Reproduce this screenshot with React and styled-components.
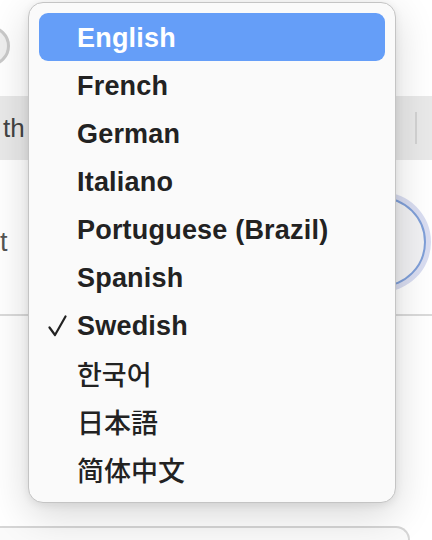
import styled, { createGlobalStyle } from 'styled-components'
import React from "react";

const Global = createGlobalStyle`
    html, body {
        margin: 0;
        padding: 0;
        background: #ffffff;
    }
    body {
        font-family: "Liberation Sans", Arial, "Noto Sans CJK SC", sans-serif;
    }
`

const Page = styled.div`
    position: relative;
    width: 432px;
    height: 540px;
    overflow: hidden;
    background: #ffffff;
`

//Background settings page
const Backdrop = styled.div`
    display: flex;
    flex-direction: column;
    height: 100%;
`

const HeaderRow = styled.div`
    height: 96px;
    display: flex;
    align-items: flex-start;
    padding-top: 26px;
    box-sizing: border-box;
`

const Avatar = styled.div`
    width: 34px;
    height: 34px;
    margin-left: -30px;
    border-radius: 50%;
    border: 3px solid #c9c9c9;
    background: #efefef;
`

const SearchBar = styled.div`
    height: 64px;
    background: #e9e9e9;
    display: flex;
    align-items: center;
    justify-content: space-between;
    padding: 0 15px 0 3px;
    font-size: 26px;
    color: #444;
`

const Divider = styled.div`
    width: 2px;
    height: 32px;
    background: #d2d2d2;
`

const FieldRow = styled.div`
    height: 156px;
    display: flex;
    align-items: center;
    justify-content: space-between;
    border-bottom: 2px solid #dadada;
    box-sizing: border-box;
    padding-top: 10px;
    font-size: 27px;
    color: #555;
`

const Knob = styled.div`
    width: 86px;
    height: 86px;
    margin-right: 6px;
    border-radius: 50%;
    background: #f1f1f3;
    border: 2px solid #7f9fd8;
    box-shadow: 0 0 0 5px #d9ddf1;
`

const Spacer = styled.div`
    flex: 1;
`

const Card = styled.div`
    height: 12px;
    margin: 0 22px 0 -40px;
    border: 2px solid #d6d6d6;
    border-bottom: none;
    border-radius: 0 44px 0 0;
    background: #fafafa;
`

//Menu
const Menu = styled.ul`
    position: absolute;
    left: 28px;
    top: 2px;
    width: 368px;
    margin: 0;
    padding: 10px 10px 9px;
    box-sizing: border-box;
    list-style: none;
    background: #fafafa;
    border: 1px solid #c4c4c4;
    border-radius: 15px;
    box-shadow: 0 12px 40px rgba(0, 0, 0, 0.16), 0 2px 8px rgba(0, 0, 0, 0.08);
`

const Item = styled.li`
    position: relative;
    height: 48px;
    display: flex;
    align-items: center;
    padding-left: 38px;
    padding-top: ${p => p.$cjk ? '0' : '3px'};
    box-sizing: border-box;
    border-radius: 9px;
    background: ${p => p.$active ? '#659ef8' : 'transparent'};
    color: ${p => p.$active ? '#ffffff' : '#222222'};
    font-size: 27px;
    font-weight: ${p => p.$cjk ? 500 : 700};
    font-family: ${p => p.$cjk
        ? '"Noto Sans CJK KR", "Noto Sans CJK JP", "Noto Sans CJK SC", sans-serif'
        : '"Liberation Sans", Arial, sans-serif'};
    letter-spacing: ${p => p.$cjk ? '0' : '0.2px'};
    white-space: nowrap;
`

const Check = styled.svg`
    position: absolute;
    left: 9px;
    top: 14px;
    width: 19px;
    height: 22px;
`

const languages = [
    {label: 'English', active: true},
    {label: 'French'},
    {label: 'German'},
    {label: 'Italiano'},
    {label: 'Portuguese (Brazil)'},
    {label: 'Spanish'},
    {label: 'Swedish', checked: true},
    {label: '한국어', cjk: true},
    {label: '日本語', cjk: true},
    {label: '简体中文', cjk: true},
]

const App = () => {
    return (
        <Page>
            <Global />
            <Backdrop>
                <HeaderRow>
                    <Avatar />
                </HeaderRow>
                <SearchBar>
                    <span>th</span>
                    <Divider />
                </SearchBar>
                <FieldRow>
                    <span>t</span>
                    <Knob />
                </FieldRow>
                <Spacer />
                <Card />
            </Backdrop>
            <Menu>
                {languages.map(l => (
                    <Item key={l.label} $active={l.active} $cjk={l.cjk}>
                        {l.checked &&
                            <Check viewBox="0 0 19 22">
                                <polyline points="1.5,12.5 7,20 17.5,1.5" fill="none" stroke="#222" strokeWidth="2.2" strokeLinecap="round" strokeLinejoin="round"/>
                            </Check>
                        }
                        {l.label}
                    </Item>
                ))}
            </Menu>
        </Page>
    );
}

export default App
